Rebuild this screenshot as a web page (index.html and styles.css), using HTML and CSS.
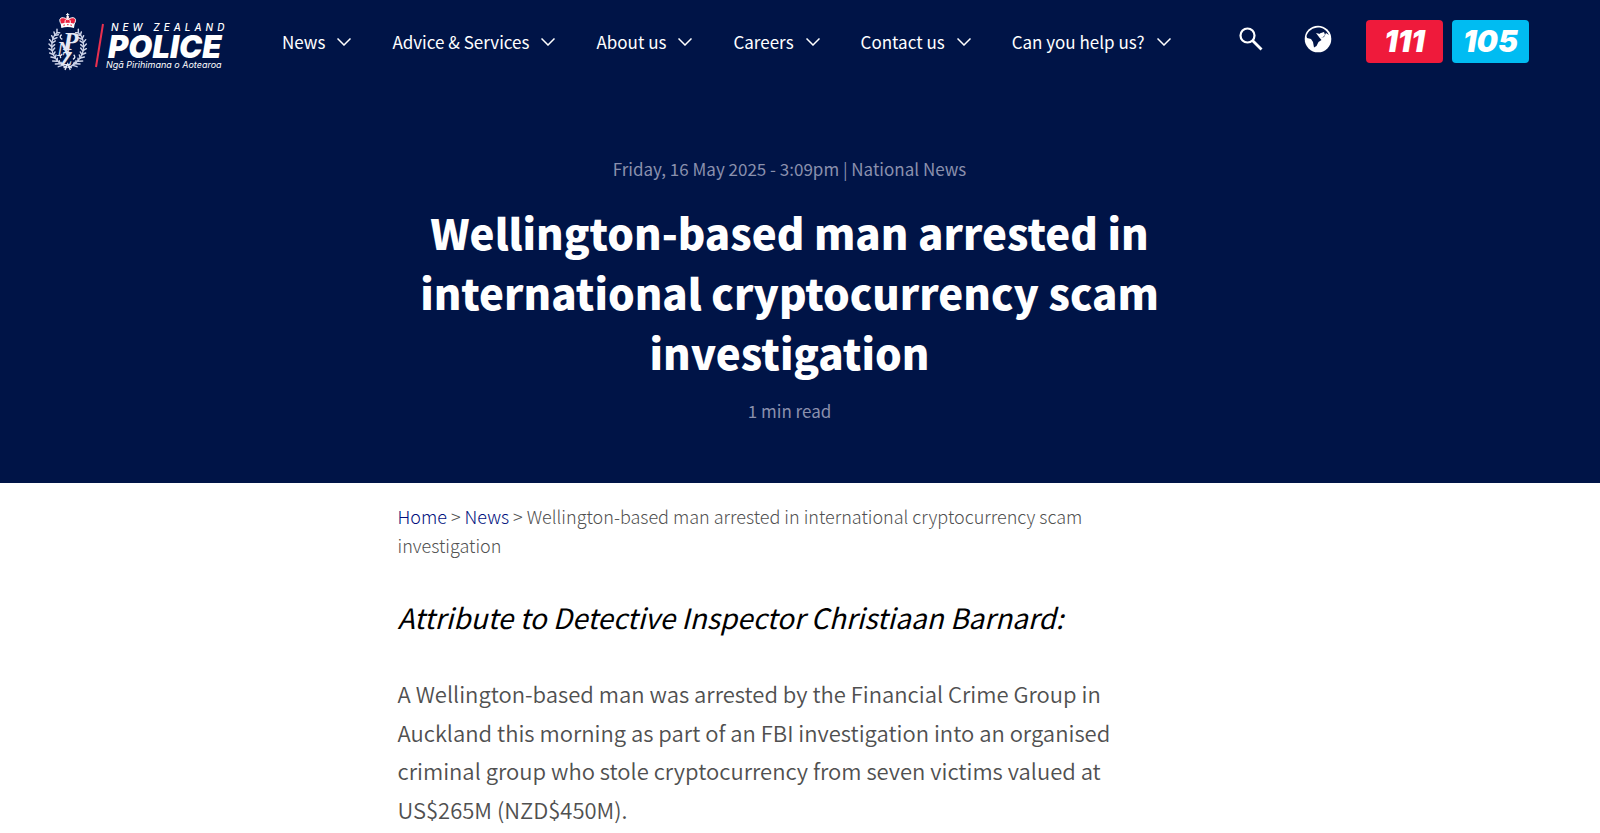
FILE: index.html
```html
<!DOCTYPE html>
<html lang="en">
<head>
  <meta charset="UTF-8">
  <meta name="viewport" content="width=device-width, initial-scale=1.0">
  <title>Wellington-based man arrested in international cryptocurrency scam investigation | New Zealand Police</title>
  <link rel="stylesheet" href="styles.css">
</head>
<body>
  <svg class="sprite" aria-hidden="true">
    <symbol id="chevron" viewBox="0 0 14 8">
      <path d="M.5 .5l6.500 6.500 6.500-6.500" fill="none" stroke="currentColor" stroke-width="1.5"/>
    </symbol>
  </svg>

  <header class="site-header">
    <a class="logo" href="#" aria-label="New Zealand Police home">
      <svg viewBox="0 0 180 60" width="180" height="60">
        <g transform="translate(-3 -4) scale(.3333)">
          <g id="fern" fill="none" stroke="#ccd3e8" stroke-width="4.4" stroke-linecap="round">
            <path d="M66 178C46 172 20 146 20 116C20 96 26 82 36 74" stroke-width="4"/>
            <path d="M52 172l-12 4M44 167l-13 1M36 160l-13 -1M30 150l-12 -3M25 140l-11 -5M22 128l-10 -6M20 116l-8 -8M21 104l-7 -9M25 93l-5 -10M30 82l-3 -10M36 74l0 -10"/>
            <path d="M52 172l-4 -9M44 167l-1 -9M36 160l1 -9M30 150l3 -9M25 140l5 -8M23 128l6 -8M22 116l7 -6M23 104l8 -5M27 93l9 -4M32 82l8 -2M38 74l6 0"/>
          </g>
          <use href="#fern" transform="matrix(-1 0 0 1 136 0)"/>
          <g fill="none" stroke="#e4e8f4" stroke-width="4">
            <path d="M56 180l12-10 12 10M60 186l8-18 8 18"/>
            <path d="M50 80q-10 7 2 14M86 140q8 8-2 14M48 150q-6-6 4-12"/>
          </g>
          <g class="monogram">
            <text x="54" y="126" font-size="76">P</text>
            <text x="36" y="144" font-size="60">N</text>
            <text x="48" y="170" font-size="56">Z</text>
          </g>
          <path d="M50 48C38 34 48 25 61 31L68 26L75 31C88 25 98 34 86 48Z" fill="#e8203f"/>
          <g fill="none" stroke="#fff" stroke-width="3">
            <path d="M50 50C36 32 50 22 68 35C86 22 100 32 86 50M61 49C58 38 62 34 68 32C74 34 78 38 75 49M68 15v19M63 20h10"/>
          </g>
          <path d="M47 47Q68 41 89 47L87 60Q68 54 49 60Z" fill="#fff"/>
          <circle cx="68" cy="27" r="4" fill="#fff"/>
          <path d="M55 52l5-1M66 50h5M76 51l5 1" stroke="#e8203f" stroke-width="3"/>
        </g>
        <path d="M55 12L48 55" stroke="#e8304f" stroke-width="2"/>
        <text class="logo-top" x="63" y="19">NEW ZEALAND</text>
        <text class="logo-main" x="60" y="46">POLICE</text>
        <text class="logo-sub" x="58" y="56">Ngā Pirihimana o Aotearoa</text>
      </svg>
    </a>

    <nav class="main-nav" aria-label="Main">
      <a href="#">News <svg class="chevron"><use href="#chevron"/></svg></a>
      <a href="#">Advice &amp; Services <svg class="chevron"><use href="#chevron"/></svg></a>
      <a href="#">About us <svg class="chevron"><use href="#chevron"/></svg></a>
      <a href="#">Careers <svg class="chevron"><use href="#chevron"/></svg></a>
      <a href="#">Contact us <svg class="chevron"><use href="#chevron"/></svg></a>
      <a href="#">Can you help us? <svg class="chevron"><use href="#chevron"/></svg></a>
    </nav>

    <div class="tools">
      <button class="icon-button" type="button" aria-label="Search">
        <svg viewBox="0 0 24 24" width="24" height="24" fill="none" stroke="#fff">
          <circle cx="8.500" cy="8.500" r="7" stroke-width="2.200"/>
          <path d="M13.500 13.500l9 9" stroke-width="2.800"/>
        </svg>
      </button>
      <button class="icon-button" type="button" aria-label="Change language">
        <svg viewBox="0 0 28 28" width="28" height="28">
          <circle cx="14" cy="14" r="13.300" fill="#fff"/>
          <path d="M2.500 11C4 6 9 2.500 14 2.500S22.500 5 25 10L22 8L20 12L17 13L18.500 10L16 8L15 12L17.500 15L14.500 17L12.500 21L10 22.500L9 17L7 14L3 13Z" fill="#001447"/>
          <path d="M12 8l4 1 1-1 3-1 1 3-3 3-3-1z" fill="#fff"/>
        </svg>
      </button>
    </div>

    <div class="call-links">
      <a class="call call-red" href="#">111</a>
      <a class="call call-blue" href="#">105</a>
    </div>
  </header>

  <section class="hero">
    <div class="container">
      <p class="meta">Friday, 16 May 2025 - 3:09pm | National News</p>
      <h1>Wellington-based man arrested in international cryptocurrency scam investigation</h1>
      <p class="meta">1 min read</p>
    </div>
  </section>

  <main class="content">
    <div class="container">
      <nav class="breadcrumb" aria-label="Breadcrumb">
        <a href="#">Home</a> &gt; <a href="#">News</a> &gt; Wellington-based man arrested in international cryptocurrency scam investigation
      </nav>
      <h2>Attribute to Detective Inspector Christiaan Barnard:</h2>
      <p>A Wellington-based man was arrested by the Financial Crime Group in Auckland this morning as part of an FBI investigation into an organised criminal group who stole cryptocurrency from seven victims valued at US$265M (NZD$450M).</p>
    </div>
  </main>
</body>
</html>
```
FILE: styles.css
```css
* {
  box-sizing: border-box;
}

body {
  margin: 0;
  font-family: "Noto Sans CJK SC", "Open Sans", sans-serif;
  color: #505050;
  background: #fff;
}

.sprite {
  display: none;
}

a {
  text-decoration: none;
}

.site-header {
  display: flex;
  align-items: center;
  min-height: 83px;
  padding: 0 71px 0 48px;
  background: #001447;
}

.logo {
  display: flex;
  margin-right: 54px;
}

.monogram {
  font-family: "Liberation Serif", serif;
  font-style: italic;
  font-weight: 700;
  fill: #e4e8f4;
}

.logo-top,
.logo-main,
.logo-sub {
  font-family: Inter, sans-serif;
  font-style: italic;
  fill: #fff;
}

.logo-top {
  font-size: 10px;
  font-weight: 500;
  letter-spacing: 4px;
}

.logo-main {
  font-size: 31px;
  font-weight: 900;
}

.logo-sub {
  font-size: 9px;
  font-weight: 400;
}

.main-nav {
  display: flex;
  gap: 41px;
}

.main-nav a {
  display: flex;
  align-items: center;
  gap: 12px;
  color: #fff;
  font-size: 17px;
  white-space: nowrap;
}

.chevron {
  width: 14px;
  height: 8px;
}

.tools {
  display: flex;
  align-items: center;
  gap: 41px;
  margin-left: auto;
  padding-bottom: 6px;
}

.icon-button {
  display: flex;
  padding: 0;
  border: none;
  background: none;
  cursor: pointer;
}

.call-links {
  display: flex;
  gap: 9px;
  margin-left: 34px;
}

.call {
  width: 77px;
  border-radius: 4px;
  color: #fff;
  font: italic 900 30px/43px Inter, sans-serif;
  text-align: center;
}

.call-red {
  background: #ef1a3b;
}

.call-blue {
  background: #00bcf2;
}

.container {
  max-width: 784px;
  margin: 0 auto;
}

.hero,
.content {
  padding-right: 21px;
}

.hero {
  padding-top: 72px;
  padding-bottom: 58px;
  background: #001447;
  text-align: center;
}

.meta {
  margin: 0;
  color: #8a90ad;
  font-size: 17px;
  line-height: 28px;
}

h1 {
  margin: 19px 0 15px;
  color: #fff;
  font-size: 42px;
  font-weight: 900;
  line-height: 60px;
}

.breadcrumb {
  padding-top: 19px;
  font-size: 18px;
  font-weight: 300;
  line-height: 29px;
}

.breadcrumb a {
  color: #000f7d;
}

h2 {
  margin: 37px 0;
  color: #000;
  font-size: 28px;
  font-style: italic;
  font-weight: 400;
  line-height: 40px;
}

.content p {
  max-width: 740px;
  margin: 0;
  font-size: 22px;
  font-weight: 350;
  line-height: 1.75;
}
```
